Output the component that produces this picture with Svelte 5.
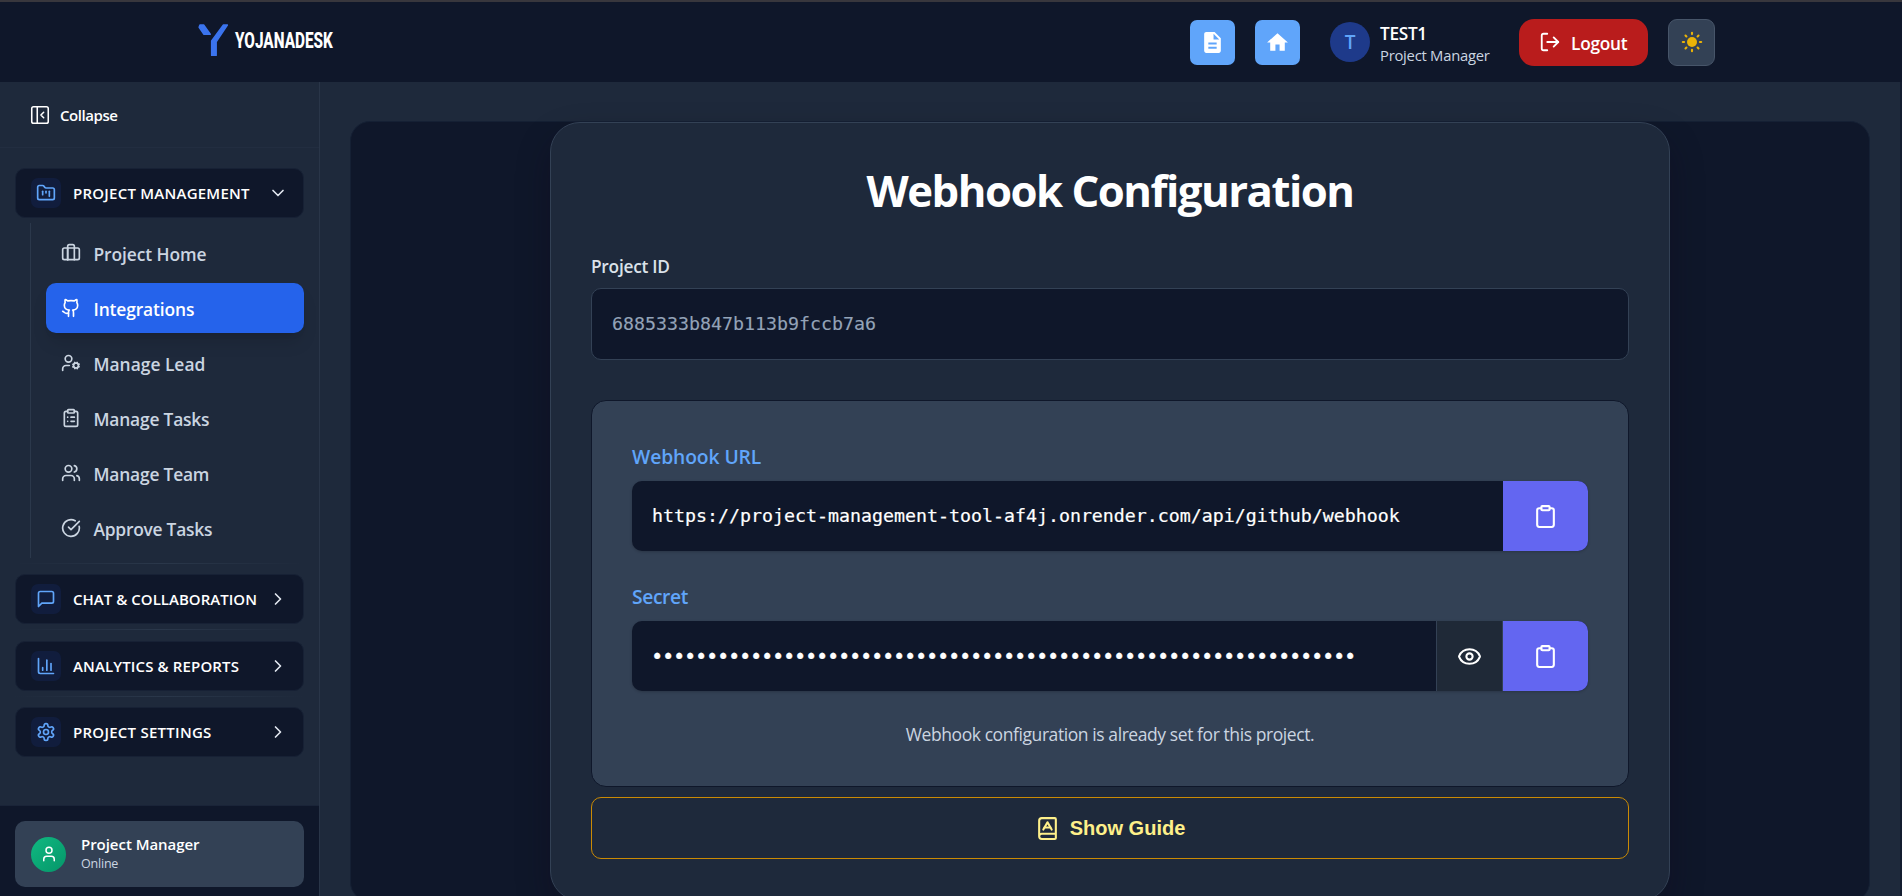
<script>
  const icons = {
    collapse: '<rect width="18" height="18" x="3" y="3" rx="2"/><path d="M9 3v18"/><path d="m16 15-3-3 3-3"/>',
    folder: '<path d="M4 20h16a2 2 0 0 0 2-2V8a2 2 0 0 0-2-2h-7.93a2 2 0 0 1-1.66-.9l-.82-1.2A2 2 0 0 0 7.93 3H4a2 2 0 0 0-2 2v13c0 1.1.9 2 2 2Z"/><path d="M8 10v4"/><path d="M12 10v2"/><path d="M16 10v6"/>',
    briefcase: '<path d="M8 6v14"/><path d="M16 20V4a2 2 0 0 0-2-2h-4a2 2 0 0 0-2 2v16"/><rect width="20" height="14" x="2" y="6" rx="2"/>',
    github: '<path d="M15 22v-4a4.8 4.8 0 0 0-1-3.5c3 0 6-2 6-5.5.08-1.25-.27-2.48-1-3.5.28-1.15.28-2.35 0-3.5 0 0-1 0-3 1.5-2.64-.5-5.36-.5-8 0C6 2 5 2 5 2c-.3 1.15-.3 2.35 0 3.5A5.403 5.403 0 0 0 4 9c0 3.5 3 5.5 6 5.5-.39.49-.68 1.05-.85 1.65-.17.6-.22 1.23-.15 1.85v4"/><path d="M9 18c-4.51 2-5-2-7-2"/>',
    userCog: '<circle cx="18" cy="15" r="3"/><circle cx="9" cy="7" r="4"/><path d="M10 15H6a4 4 0 0 0-4 4v2"/><path d="m21.7 16.4-.9-.3"/><path d="m15.2 13.9-.9-.3"/><path d="m16.6 18.7.3-.9"/><path d="m19.1 12.2.3-.9"/><path d="m19.6 18.7-.4-1"/><path d="m16.8 12.3-.4-1"/><path d="m14.3 16.6 1-.4"/><path d="m20.7 13.8 1-.4"/>',
    clipboardList: '<rect width="8" height="4" x="8" y="2" rx="1"/><path d="M16 4h2a2 2 0 0 1 2 2v14a2 2 0 0 1-2 2H6a2 2 0 0 1-2-2V6a2 2 0 0 1 2-2h2"/><path d="M12 11h4"/><path d="M12 16h4"/><path d="M8 11h.01"/><path d="M8 16h.01"/>',
    users: '<path d="M16 21v-2a4 4 0 0 0-4-4H6a4 4 0 0 0-4 4v2"/><circle cx="9" cy="7" r="4"/><path d="M22 21v-2a4 4 0 0 0-3-3.87"/><path d="M16 3.13a4 4 0 0 1 0 7.75"/>',
    check: '<path d="M21.801 10A10 10 0 1 1 17 3.335"/><path d="m9 11 3 3L22 4"/>',
    chat: '<path d="M21 15a2 2 0 0 1-2 2H7l-4 4V5a2 2 0 0 1 2-2h14a2 2 0 0 1 2 2z"/>',
    chart: '<path d="M3 3v16a2 2 0 0 0 2 2h16"/><path d="M18 17V9"/><path d="M13 17V5"/><path d="M8 17v-3"/>',
    settings: '<path d="M12.22 2h-.44a2 2 0 0 0-2 2v.18a2 2 0 0 1-1 1.73l-.43.25a2 2 0 0 1-2 0l-.15-.08a2 2 0 0 0-2.73.73l-.22.38a2 2 0 0 0 .73 2.73l.15.1a2 2 0 0 1 1 1.72v.51a2 2 0 0 1-1 1.74l-.15.09a2 2 0 0 0-.73 2.73l.22.38a2 2 0 0 0 2.73.73l.15-.08a2 2 0 0 1 2 0l.43.25a2 2 0 0 1 1 1.73V20a2 2 0 0 0 2 2h.44a2 2 0 0 0 2-2v-.18a2 2 0 0 1 1-1.73l.43-.25a2 2 0 0 1 2 0l.15.08a2 2 0 0 0 2.73-.73l.22-.39a2 2 0 0 0-.73-2.73l-.15-.08a2 2 0 0 1-1-1.74v-.5a2 2 0 0 1 1-1.74l.15-.09a2 2 0 0 0 .73-2.73l-.22-.38a2 2 0 0 0-2.73-.73l-.15.08a2 2 0 0 1-2 0l-.43-.25a2 2 0 0 1-1-1.73V4a2 2 0 0 0-2-2z"/><circle cx="12" cy="12" r="3"/>',
    down: '<path d="m6 9 6 6 6-6"/>',
    right: '<path d="m9 18 6-6-6-6"/>',
    user: '<path d="M19 21v-2a4 4 0 0 0-4-4H9a4 4 0 0 0-4 4v2"/><circle cx="12" cy="7" r="4"/>',
    logout: '<path d="M9 21H5a2 2 0 0 1-2-2V5a2 2 0 0 1 2-2h4"/><path d="m16 17 5-5-5-5"/><path d="M21 12H9"/>',
    clipboard: '<rect width="8" height="4" x="8" y="2" rx="1"/><path d="M16 4h2a2 2 0 0 1 2 2v14a2 2 0 0 1-2 2H6a2 2 0 0 1-2-2V6a2 2 0 0 1 2-2h2"/>',
    eye: '<path d="M2.062 12.348a1 1 0 0 1 0-.696 10.75 10.75 0 0 1 19.876 0 1 1 0 0 1 0 .696 10.75 10.75 0 0 1-19.876 0"/><circle cx="12" cy="12" r="3"/>',
    book: '<path d="M4 19.5v-15A2.5 2.5 0 0 1 6.5 2H19a1 1 0 0 1 1 1v18a1 1 0 0 1-1 1H6.5a1 1 0 0 1 0-5H20"/><path d="m8 13 4-7 4 7"/><path d="M9.1 11h5.7"/>'
  };

  const links = [
    { label: 'Project Home', icon: 'briefcase', ls: -0.1 },
    { label: 'Integrations', icon: 'github', ls: -0.13, active: true },
    { label: 'Manage Lead', icon: 'userCog', ls: 0 },
    { label: 'Manage Tasks', icon: 'clipboardList', ls: -0.2 },
    { label: 'Manage Team', icon: 'users', ls: -0.2 },
    { label: 'Approve Tasks', icon: 'check', ls: -0.25 }
  ];

  const sections = [
    { label: 'CHAT & COLLABORATION', icon: 'chat', ls: 0.03 },
    { label: 'ANALYTICS & REPORTS', icon: 'chart', ls: 0.13 },
    { label: 'PROJECT SETTINGS', icon: 'settings', ls: 0.26 }
  ];

  const secretMask = '•'.repeat(64);
  const rays = [0, 45, 90, 135, 180, 225, 270, 315];
</script>

{#snippet icon(name, size, width = 2)}
  <svg width={size} height={size} viewBox="0 0 24 24" fill="none" stroke="currentColor" stroke-width={width} stroke-linecap="round" stroke-linejoin="round">{@html icons[name]}</svg>
{/snippet}

{#snippet section(s, arrow)}
  <button class="section">
    <span class="badge">{@render icon(s.icon, 20)}</span>
    <span class="section-label" style="letter-spacing:{s.ls}px">{s.label}</span>
    <span class="arrow">{@render icon(arrow, 20)}</span>
  </button>
{/snippet}

<div class="page">
  <header>
    <div class="brand">
      <svg width="36" height="46" viewBox="0 0 36 46">
        <path d="M5 6h3.6l6.6 9.3H9L4.2 8.2Z" fill="#3b74ee" stroke="#3b74ee" stroke-width="1.6" stroke-linejoin="round" />
        <path d="M28.4 6h4L21.2 22.8V36.4h-4.6V22Z" fill="#3b74ee" stroke="#3b74ee" stroke-width="1.4" stroke-linejoin="round" />
      </svg>
      <span class="wordmark">YOJANADESK</span>
    </div>
    <div class="tools">
      <button class="square" aria-label="Documents">
        <svg width="25" height="25" viewBox="0 0 24 24" fill="#fff"><path d="M14 2H6c-1.1 0-2 .9-2 2v16c0 1.1.9 2 2 2h12c1.1 0 2-.9 2-2V8l-6-6zm2 16H8v-2h8v2zm0-4H8v-2h8v2zm-3-5V3.5L18.5 9H13z" /></svg>
      </button>
      <button class="square home" aria-label="Home">
        <svg width="25" height="25" viewBox="0 0 24 24" fill="#fff"><path d="M10 20v-6h4v6h5v-8h3L12 3 2 12h3v8z" /></svg>
      </button>
      <div class="initial">T</div>
      <div class="who">
        <strong>TEST1</strong>
        <span>Project Manager</span>
      </div>
      <button class="logout">{@render icon('logout', 22)}<span>Logout</span></button>
      <button class="theme" aria-label="Theme">
        <svg width="24" height="24" viewBox="-12 -12 24 24">
          <circle r="5" fill="#eab308" />
          {#each rays as a}
            <path d="M0 -9.2V-7.9" transform="rotate({a})" stroke="#eab308" stroke-width="2.1" stroke-linecap="round" />
          {/each}
        </svg>
      </button>
    </div>
  </header>

  <div class="body">
    <aside>
      <button class="collapse">{@render icon('collapse', 22, 1.7)}<span>Collapse</span></button>
      <nav>
        {@render section({ label: 'PROJECT MANAGEMENT', icon: 'folder', ls: 0.24 }, 'down')}
        <ul>
          {#each links as l}
            <li class:active={l.active}>
              {@render icon(l.icon, 20)}
              <span style="letter-spacing:{l.ls}px">{l.label}</span>
            </li>
          {/each}
        </ul>
        {#each sections as s}
          <hr />
          {@render section(s, 'right')}
        {/each}
      </nav>
      <div class="status">
        <div class="status-card">
          <span class="avatar">{@render icon('user', 18)}</span>
          <div>
            <strong>Project Manager</strong>
            <span>Online</span>
          </div>
        </div>
      </div>
    </aside>

    <main>
      <div class="stage">
        <div class="card">
          <h1>Webhook Configuration</h1>
          <div class="id-label">Project ID</div>
          <div class="id-box">6885333b847b113b9fccb7a6</div>
          <div class="panel">
            <div class="label">Webhook URL</div>
            <div class="field">
              <div class="value">https://project-management-tool-af4j.onrender.com/api/github/webhook</div>
              <button class="copy" aria-label="Copy URL">{@render icon('clipboard', 25)}</button>
            </div>
            <div class="label secret">Secret</div>
            <div class="field">
              <div class="value mask">{secretMask}</div>
              <button class="eye" aria-label="Show secret">{@render icon('eye', 25)}</button>
              <button class="copy" aria-label="Copy secret">{@render icon('clipboard', 25)}</button>
            </div>
            <p>Webhook configuration is already set for this project.</p>
          </div>
          <button class="guide">{@render icon('book', 25)}<span>Show Guide</span></button>
        </div>
      </div>
    </main>
  </div>
</div>

<style>
  :global(body) { margin: 0; background: #0f172a; overflow: hidden; }
  * { box-sizing: border-box; }
  button { font: inherit; color: inherit; border: 0; margin: 0; padding: 0; background: none; }
  svg { display: block; flex: none; }
  .page { height: 896px; display: flex; flex-direction: column; overflow: hidden; font-family: "Open Sans", "Noto Sans", sans-serif; color: #fff; white-space: nowrap; }

  header { flex: none; height: 82px; border-top: 2px solid #38373d; background: #0f172a; display: flex; justify-content: space-between; padding: 0 187px 0 195px; }
  .brand { padding-top: 17px; display: flex; align-items: flex-start; }
  .wordmark { margin: 9px 0 0 4px; font: 800 21.5px/26px Roboto, sans-serif; color: #fff; transform: scaleX(0.713); transform-origin: 0 50%; }
  .tools { display: flex; align-items: center; }
  .square { width: 45px; height: 45px; border-radius: 7px; background: #60a5fa; display: grid; place-items: center; }
  .home { margin-left: 20px; }
  .initial { width: 40px; height: 40px; border-radius: 50%; background: #1e3a8a; color: #60a5fa; font-size: 19px; font-weight: 550; margin-left: 30px; display: grid; place-items: center; }
  .who { display: flex; flex-direction: column; width: 109px; margin: 3px 0 0 10px; }
  .who strong { font-size: 17.2px; line-height: 24px; font-weight: 620; letter-spacing: -0.28px; }
  .who span { font-size: 14.8px; line-height: 19px; color: #cbd5e1; letter-spacing: -0.25px; }
  .logout { width: 129px; height: 47px; margin-left: 30px; border-radius: 15px; background: #b91c1c; display: flex; align-items: center; padding-left: 20px; gap: 10px; font-weight: 650; font-size: 17.3px; letter-spacing: -0.24px; }
  .logout span { padding-top: 3px; }
  .theme { width: 47px; height: 47px; border-radius: 9px; margin-left: 20px; background: #334155; border: 1px solid #475569; display: grid; place-items: center; }

  .body { flex: 1; display: flex; min-height: 0; }
  aside { width: 320px; flex: none; background: #1e293b; border-right: 1px solid #293548; display: flex; flex-direction: column; }
  .collapse { flex: none; height: 66px; border-bottom: 1px solid #222d40; display: flex; align-items: center; padding-left: 29px; gap: 9px; font-size: 15px; font-weight: 620; letter-spacing: -0.43px; }
  nav { flex: 1; padding: 20px 15px 0; }
  .section { width: 289px; height: 50px; border: 1px solid #172135; border-radius: 10px; background: #0f172a; display: flex; align-items: center; padding: 0 14px 0 15px; font-size: 15px; font-weight: 620; }
  .badge { width: 30px; height: 30px; border-radius: 7px; background: #111d3d; color: #60a5fa; display: grid; place-items: center; }
  .section-label { margin-left: 12px; }
  .arrow { margin-left: auto; margin-right: 1px; color: #e2e8f0; }
  ul { list-style: none; margin: 5px 0 0 15px; padding: 5px 0 5px 15px; border-left: 1px solid #2b384b; display: flex; flex-direction: column; gap: 5px; }
  li { height: 50px; border-radius: 10px; display: flex; align-items: center; padding-left: 15px; gap: 12.5px; font-size: 17.4px; font-weight: 580; color: #cbd5e1; }
  li span { padding-top: 2px; }
  li.active { background: #2563eb; color: #fff; font-weight: 620; box-shadow: 0 12px 18px -4px rgba(0, 0, 0, 0.13), 0 5px 7px -5px rgba(0, 0, 0, 0.12); }
  hr { border: 0; height: 1px; margin: 5px 0 10.5px; background: linear-gradient(90deg, transparent, #2a374a, transparent); }
  ul + hr { margin-bottom: 10px; }
  .status { flex: none; height: 91px; background: #0f172a; border-top: 1px solid #1a2438; padding: 15px 15px 9px; }
  .status-card { height: 66px; border-radius: 10px; background: #334155; display: flex; align-items: center; padding-left: 16px; gap: 15px; }
  .avatar { width: 35px; height: 35px; border-radius: 50%; background: linear-gradient(135deg, #10b981, #059669); display: grid; place-items: center; }
  .status-card div { display: flex; flex-direction: column; }
  .status-card strong { font-size: 15px; line-height: 19px; font-weight: 620; letter-spacing: -0.04px; }
  .status-card div span { font-size: 12.5px; line-height: 19px; font-weight: 500; color: #cbd5e1; letter-spacing: -0.2px; }

  main { flex: 1; background: #1e293b; border-right: 2px solid #131c2f; padding: 39px 30px 0; }
  .stage { height: 781px; border-radius: 20px; background: #0f172a; border: 1px solid #152034; display: flex; justify-content: center; }
  .card { width: 1120px; height: 779px; border: 1px solid #334155; border-radius: 30px; background: #1e293b; padding: 39px 40px 0; box-shadow: 0 16px 34px rgba(18, 8, 24, 0.3); }
  h1 { margin: 0; font-size: 43.7px; line-height: 56px; font-weight: 730; letter-spacing: -1.5px; text-align: center; }
  .id-label { margin: 36px 0 8px; font-size: 17.3px; line-height: 26px; font-weight: 580; letter-spacing: -0.25px; color: #dbe2ea; }
  .id-box { height: 72px; border: 1px solid #334155; border-radius: 10px; background: #0f172a; padding-left: 20px; line-height: 69px; color: #94a3b8; font-family: "DejaVu Sans Mono", monospace; font-size: 18.27px; -webkit-text-stroke: 0.15px currentColor; }
  .panel { height: 387px; margin: 40px 0 10px; border: 1px solid #0f172a; border-radius: 15px; background: #334155; padding: 42px 40px 0; }
  .label { margin-bottom: 11px; font-size: 19.3px; line-height: 27px; font-weight: 580; letter-spacing: -0.1px; color: #60a5fa; }
  .secret { margin-top: 32px; letter-spacing: -0.4px; }
  .field { display: flex; height: 70px; border-radius: 10px; overflow: hidden; background: #0f172a; box-shadow: 0 1px 3px rgba(0, 0, 0, 0.2); }
  .value { flex: 1; padding-left: 20px; line-height: 70px; font-family: "DejaVu Sans Mono", monospace; font-size: 18.27px; -webkit-text-stroke: 0.2px currentColor; }
  .mask { padding-left: 19px; font-size: 20.5px; letter-spacing: -1.342px; line-height: 72px; }
  .copy { width: 85px; background: #6366f1; display: grid; place-items: center; }
  .eye { width: 67px; background: #1f2937; border: 1px solid #334155; border-width: 0 1px; display: grid; place-items: center; }
  p { margin: 30px 0 0; font-size: 17.5px; line-height: 26px; letter-spacing: -0.42px; color: #cbd5e1; text-align: center; }
  .guide { width: 100%; height: 62px; border: 1px solid #ca8a04; border-radius: 10px; display: flex; align-items: center; justify-content: center; gap: 10px; color: #fef08a; font: 700 20px "Liberation Sans", Arial, sans-serif; }
</style>
